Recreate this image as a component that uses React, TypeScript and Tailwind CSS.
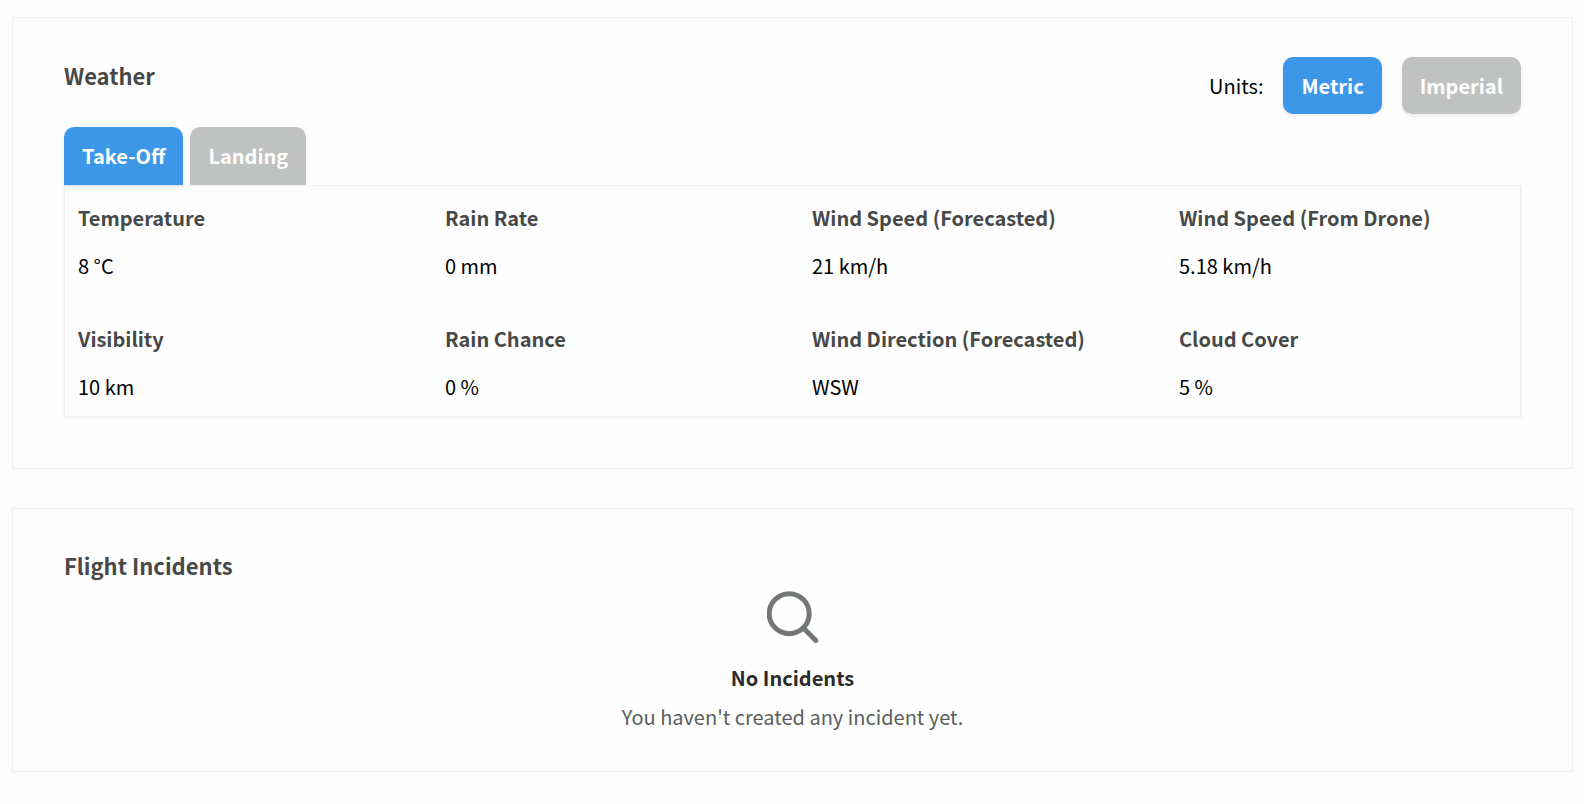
import React, { useState } from 'react';

type Units = 'metric' | 'imperial';
type Phase = 'takeoff' | 'landing';

interface Reading {
  label: string;
  value: string;
}

const readings: Reading[] = [
  { label: 'Temperature', value: '8 °C' },
  { label: 'Rain Rate', value: '0 mm' },
  { label: 'Wind Speed (Forecasted)', value: '21 km/h' },
  { label: 'Wind Speed (From Drone)', value: '5.18 km/h' },
  { label: 'Visibility', value: '10 km' },
  { label: 'Rain Chance', value: '0 %' },
  { label: 'Wind Direction (Forecasted)', value: 'WSW' },
  { label: 'Cloud Cover', value: '5 %' },
];

interface ToggleButtonProps {
  active: boolean;
  className: string;
  onClick: () => void;
  children: React.ReactNode;
}

const ToggleButton: React.FC<ToggleButtonProps> = ({ active, className, onClick, children }) => (
  <button
    type="button"
    aria-pressed={active}
    onClick={onClick}
    className={`px-[18px] font-bold text-white cursor-pointer ${
      active ? 'bg-[#3d97e8]' : 'bg-[#c0c2c1]'
    } ${className}`}
  >
    {children}
  </button>
);

const WeatherCard: React.FC = () => {
  const [units, setUnits] = useState<Units>('metric');
  const [phase, setPhase] = useState<Phase>('takeoff');

  return (
    <section className="border border-[#f0f0f3] px-[51px] pt-[39px] pb-[51px]">
      <div className="flex items-start justify-between">
        <h2 className="text-[22px] leading-9 font-bold text-[#474948]">Weather</h2>
        <div className="flex items-center gap-5">
          <span>Units:</span>
          <ToggleButton
            active={units === 'metric'}
            onClick={() => setUnits('metric')}
            className="h-[57px] rounded-[10px] shadow-[0_2px_4px_rgba(0,0,0,0.07)]"
          >
            Metric
          </ToggleButton>
          <ToggleButton
            active={units === 'imperial'}
            onClick={() => setUnits('imperial')}
            className="h-[57px] rounded-[10px] shadow-[0_2px_4px_rgba(0,0,0,0.07)]"
          >
            Imperial
          </ToggleButton>
        </div>
      </div>

      <div className="mt-[13px] flex gap-[7px]">
        <ToggleButton
          active={phase === 'takeoff'}
          onClick={() => setPhase('takeoff')}
          className="h-[58px] rounded-t-[10px] shadow-[0_2px_4px_rgba(0,0,0,0.07)]"
        >
          Take-Off
        </ToggleButton>
        <ToggleButton
          active={phase === 'landing'}
          onClick={() => setPhase('landing')}
          className="h-[58px] rounded-t-[10px]"
        >
          Landing
        </ToggleButton>
      </div>

      <dl className="grid grid-cols-4 gap-x-[39px] gap-y-[41px] border border-[#f0f0f3] px-[13px] pt-4 pb-[13px] shadow-[0_2px_4px_rgba(0,0,0,0.05)]">
        {readings.map((reading) => (
          <div key={reading.label} className="flex flex-col gap-4">
            <dt className="font-bold text-[#474948]">{reading.label}</dt>
            <dd>{reading.value}</dd>
          </div>
        ))}
      </dl>
    </section>
  );
};

const IncidentsCard: React.FC = () => (
  <section className="border border-[#f0f0f3] px-[51px] pt-[38px] pb-[38px]">
    <h2 className="text-[22px] leading-9 font-bold text-[#474948]">Flight Incidents</h2>
    <div className="mt-2 flex flex-col items-center">
      <svg viewBox="0 0 52 52" className="h-[52px] w-[52px]" fill="none" stroke="#737876" strokeWidth="5">
        <circle cx="22.2" cy="22.7" r="20" />
        <path d="M36.5 37l12.3 12.5" strokeWidth="5" strokeLinecap="round" />
      </svg>
      <h3 className="mt-[19px] font-bold text-[#2a2c2b]">No Incidents</h3>
      <p className="mt-[7px] text-[#5a5e5c]">You haven't created any incident yet.</p>
    </div>
  </section>
);

const App: React.FC = () => (
  <main className="flex min-h-screen flex-col gap-[39px] bg-[#fefefe] pt-[17px] pr-[11px] pb-8 pl-3 font-['Noto_Sans_CJK_SC',sans-serif] text-[20px] leading-8 text-black">
    <WeatherCard />
    <IncidentsCard />
  </main>
);

export default App;
